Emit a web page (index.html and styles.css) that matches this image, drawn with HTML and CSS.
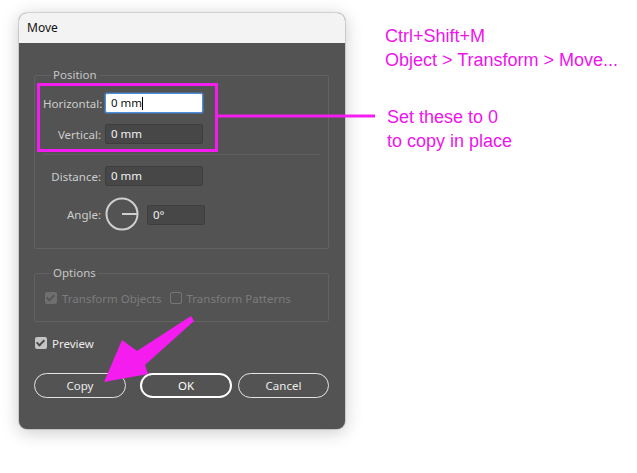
FILE: index.html
```html
<!DOCTYPE html>
<html>
<head>
<meta charset="utf-8">
<link rel="stylesheet" href="styles.css">
</head>
<body>
<div class="page">
  <div class="dialog">
    <div class="titlebar">Move</div>
    <div class="dbody">
      <fieldset class="group pos">
        <legend>Position</legend>
        <div class="row">
          <span class="lbl">Horizontal:</span>
          <span class="field active">0 mm<i class="caret"></i></span>
        </div>
        <div class="row r2">
          <span class="lbl">Vertical:</span>
          <span class="field">0 mm</span>
        </div>
        <div class="sep"></div>
        <div class="row">
          <span class="lbl">Distance:</span>
          <span class="field">0 mm</span>
        </div>
        <div class="row angle">
          <span class="lbl">Angle:</span>
          <svg class="dial" width="34" height="34" viewBox="0 0 34 34"><circle cx="17" cy="17" r="15.5" fill="none" stroke="#cfcfcf" stroke-width="2"/><line x1="17" y1="17" x2="32" y2="17" stroke="#cfcfcf" stroke-width="2"/></svg>
          <span class="field small">0°</span>
        </div>
      </fieldset>
      <fieldset class="group opts">
        <legend>Options</legend>
        <div class="checks">
          <span class="chk disabled on"></span><span class="ctext dis">Transform Objects</span>
          <span class="chk disabled off"></span><span class="ctext dis">Transform Patterns</span>
        </div>
      </fieldset>
      <div class="preview">
        <span class="chk on"></span><span class="ctext">Preview</span>
      </div>
      <div class="buttons">
        <button class="btn">Copy</button>
        <div class="btngroup">
          <button class="btn primary">OK</button>
          <button class="btn">Cancel</button>
        </div>
      </div>
    </div>
  </div>
  <div class="notes">
    <p class="note">Ctrl+Shift+M<br>Object &gt; Transform &gt; Move...</p>
    <p class="note second">Set these to 0<br>to copy in place</p>
  </div>
  <svg class="overlay" width="637" height="473" viewBox="0 0 637 473">
    <rect x="38.5" y="84.5" width="178" height="66" fill="none" stroke="#f51cf0" stroke-width="3"/>
    <line x1="218" y1="116" x2="375" y2="116" stroke="#f51cf0" stroke-width="3"/>
    <polygon points="191,316 194,321 145,365 148,374 104,382 122,340 137,351" fill="#f51cf0"/>
  </svg>
</div>
</body>
</html>
```
FILE: styles.css
```css
html, body {
  margin: 0;
  padding: 0;
  background: #ffffff;
}
.page {
  position: relative;
  width: 637px;
  height: 473px;
  display: flex;
  align-items: flex-start;
  padding: 13px 0 0 19px;
  box-sizing: border-box;
}
.dialog {
  width: 326px;
  height: 416px;
  border-radius: 8px;
  background: #535353;
  box-shadow: 0 3px 18px rgba(0,0,0,0.22), 0 0 0 1px rgba(0,0,0,0.12);
  overflow: hidden;
  display: flex;
  flex-direction: column;
  font-family: "Noto Sans", "DejaVu Sans", sans-serif;
  font-size: 11.5px;
}
.titlebar {
  height: 30px;
  flex: none;
  background: #f3f3f3;
  color: #111;
  font-size: 12px;
  line-height: 30px;
  padding-left: 8px;
}
.dbody {
  flex: 1;
  padding: 25px 16px 0 15px;
  display: flex;
  flex-direction: column;
}
.group {
  margin: 0;
  border: 1px solid #626262;
  border-radius: 2px;
  padding: 11px 8px 17px 8px;
  min-width: 0;
}
.group legend {
  margin-left: 8px;
  padding: 0 2px;
  color: #c6c6c6;
  line-height: 14px;
  font-size: 11.5px;
}
.row {
  display: flex;
  align-items: center;
  height: 20px;
}
.r2 { margin-top: 11px; }
.lbl {
  width: 58px;
  margin-right: 4px;
  text-align: right;
  color: #cdcdcd;
  white-space: nowrap;
}
.field {
  box-sizing: border-box;
  width: 98px;
  height: 20px;
  background: #474747;
  border: 1px solid #3e3e3e;
  border-radius: 2px;
  color: #f2f2f2;
  padding-left: 5px;
  line-height: 18px;
  display: flex;
  align-items: center;
}
.field.active {
  background: #ffffff;
  border: 1px solid #4a8fdc;
  box-shadow: 0 0 0 1px rgba(74,143,220,0.4);
  color: #111;
}
.caret {
  display: inline-block;
  width: 1px;
  height: 13px;
  background: #000;
}
.sep {
  height: 1px;
  background: #5f5f5f;
  margin: 10px 0 11px;
}
.row.angle {
  height: 34px;
  margin-top: 11px;
}
.dial {
  margin-right: 8px;
  flex: none;
}
.field.small {
  width: 58px;
  height: 20px;
  margin-top: 2px;
}
.opts {
  margin-top: 17px;
  padding: 11px 8px 16px 8px;
}
.checks {
  display: flex;
  align-items: center;
  height: 14px;
  padding-left: 2px;
}
.chk {
  box-sizing: border-box;
  width: 12px;
  height: 12px;
  border-radius: 2px;
  flex: none;
  position: relative;
}
.chk.on {
  background: #c4c4c4;
}
.chk.on::after {
  content: "";
  position: absolute;
  left: 3px;
  top: 1px;
  width: 3px;
  height: 6px;
  border: solid #4a4a4a;
  border-width: 0 2px 2px 0;
  transform: rotate(45deg);
}
.chk.disabled.on {
  background: #6f6f6f;
}
.chk.disabled.on::after {
  border-color: #565656;
}
.chk.off {
  border: 1px solid #767676;
}
.ctext {
  margin-left: 5px;
  color: #ececec;
  white-space: nowrap;
}
.ctext.dis {
  color: #7c7c7c;
  margin-right: 8px;
}
.preview {
  display: flex;
  align-items: center;
  margin-top: 14px;
  padding-left: 1px;
  height: 14px;
}
.buttons {
  margin-top: 23px;
  display: flex;
  justify-content: space-between;
}
.btngroup {
  display: flex;
  gap: 6px;
}
.btn {
  box-sizing: border-box;
  width: 91px;
  height: 25px;
  border: 1.5px solid #e4e4e4;
  border-radius: 13px;
  background: transparent;
  color: #ececec;
  font-family: "Noto Sans", "DejaVu Sans", sans-serif;
  font-size: 11.5px;
  padding: 0;
}
.btn:first-child { width: 92px; }
.btn.primary {
  border: 2px solid #ffffff;
  color: #ffffff;
}
.notes {
  margin-left: 40px;
  margin-top: 11px;
  font-family: "Liberation Sans", Arial, sans-serif;
  font-size: 18px;
  line-height: 24px;
  color: #ee14ec;
}
.note {
  margin: 0;
  white-space: nowrap;
}
.note.second {
  margin-top: 33px;
  padding-left: 2px;
}
.overlay {
  position: absolute;
  left: 0;
  top: 0;
  pointer-events: none;
}
```
